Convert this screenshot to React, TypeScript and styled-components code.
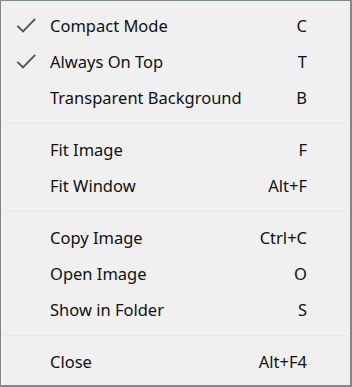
import React from "react";
import styled, { createGlobalStyle } from "styled-components";

const Global = createGlobalStyle`
  html, body { margin: 0; padding: 0; background: #f0f0f0; }
  * { box-sizing: border-box; }
`;

const Menu = styled.div`
  width: 352px;
  height: 387px;
  background: #f0f0f0;
  border-style: solid;
  border-color: #7e8888;
  border-width: 1px 2px 2px 1px;
  padding: 7px 0 0 0;
  display: flex;
  flex-direction: column;
  font-family: "Noto Sans", "Segoe UI", sans-serif;
  font-size: 16.5px;
  color: #111;
`;

const Row = styled.div`
  height: 36px;
  display: grid;
  grid-template-columns: 49px 1fr auto;
  align-items: center;
  padding-right: 43px;
`;

const CheckCell = styled.div`
  height: 36px;
`;

const Label = styled.span`
  line-height: 1;
`;

const Shortcut = styled.span`
  line-height: 1;
  text-align: right;
`;

const Separator = styled.div`
  height: 1px;
  background: #e6e6e6;
  margin: 7px 4px 8px 2px;
`;

const Check = () => (
  <svg width="49" height="36" viewBox="0 0 49 36" style={{ display: "block" }}>
    <path d="M17 18.5 L22 23.5 L33.5 11.5" fill="none" stroke="#555555" strokeWidth="1.9" strokeLinecap="square" />
  </svg>
);

type Item = { label: string; key: string; checked?: boolean };

const groups: Item[][] = [
  [
    { label: "Compact Mode", key: "C", checked: true },
    { label: "Always On Top", key: "T", checked: true },
    { label: "Transparent Background", key: "B" },
  ],
  [
    { label: "Fit Image", key: "F" },
    { label: "Fit Window", key: "Alt+F" },
  ],
  [
    { label: "Copy Image", key: "Ctrl+C" },
    { label: "Open Image", key: "O" },
    { label: "Show in Folder", key: "S" },
  ],
  [{ label: "Close", key: "Alt+F4" }],
];

export default function App() {
  return (
    <>
      <Global />
      <Menu>
        {groups.map((g, gi) => (
          <React.Fragment key={gi}>
            {gi > 0 && <Separator />}
            {g.map((it) => (
              <Row key={it.label}>
                <CheckCell>{it.checked && <Check />}</CheckCell>
                <Label>{it.label}</Label>
                <Shortcut>{it.key}</Shortcut>
              </Row>
            ))}
          </React.Fragment>
        ))}
      </Menu>
    </>
  );
}
